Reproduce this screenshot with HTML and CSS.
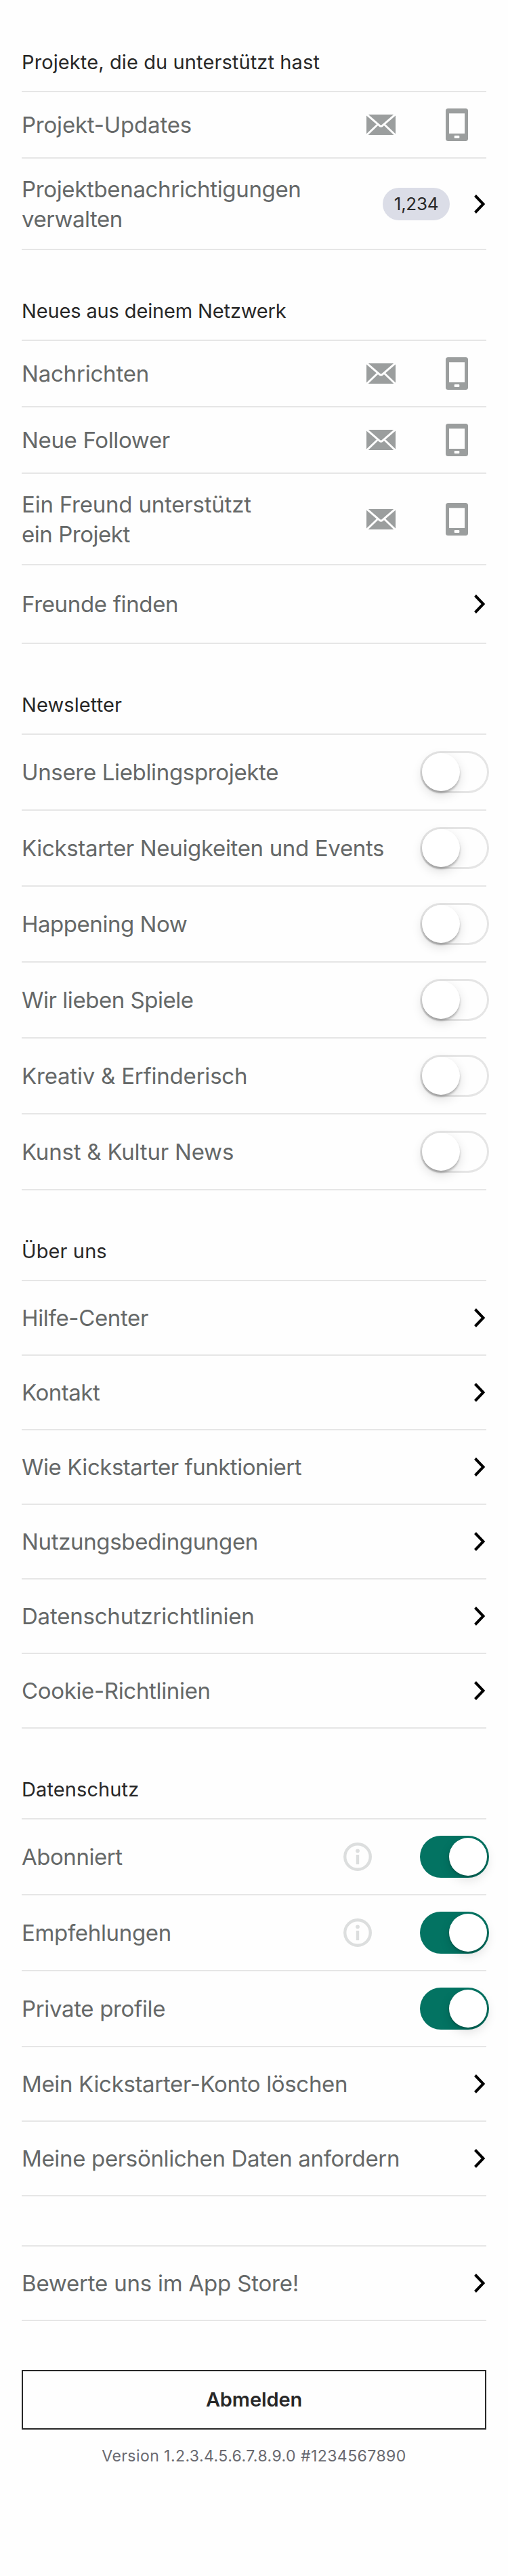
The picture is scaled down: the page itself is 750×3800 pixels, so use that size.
FILE: index.html
```html
<!DOCTYPE html>
<html lang="de">
<head>
<meta charset="utf-8">
<title>Einstellungen</title>
<link rel="stylesheet" href="styles.css">
</head>
<body>
<svg class="sprite" aria-hidden="true">
  <symbol id="mail" viewBox="0 0 43 30">
    <rect width="43" height="30" rx="1" fill="#9b9e9e"/>
    <path d="M0 -.5 19.5 16.3Q21.5 18.2 23.5 16.3L43 -.5M0 30.5 16.2 15M43 30.5 26.8 15" fill="none" stroke="#fefefe" stroke-width="3"/>
  </symbol>
  <symbol id="phone" viewBox="0 0 33 48">
    <rect width="33" height="48" rx="3.5" fill="#9b9e9e"/>
    <rect x="5" y="7.3" width="23" height="29.7" fill="#fefefe"/>
    <rect x="12.7" y="40" width="7.6" height="4" rx="1" fill="#fefefe"/>
  </symbol>
  <symbol id="chevron" viewBox="0 0 16 28">
    <path d="M1.5 1.5 13.5 14 1.5 26.5" fill="none" stroke="#000" stroke-width="4"/>
  </symbol>
  <symbol id="info" viewBox="0 0 42 42">
    <circle cx="21" cy="21" r="18.8" fill="none" stroke="#dcdede" stroke-width="4.4"/>
    <circle cx="21" cy="12.3" r="2.9" fill="#dcdede"/>
    <rect x="18.8" y="18" width="4.4" height="14.2" fill="#dcdede"/>
  </symbol>
</svg>
<main class="settings">
  <section>
    <h2 class="heading">Projekte, die du unterstützt hast</h2>
    <div class="row compact"><span class="label loose">Projekt-Updates</span><svg class="mail"><use href="#mail"/></svg><svg class="phone"><use href="#phone"/></svg></div>
    <div class="row double"><span class="label">Projektbenachrichtigungen<br><span class="tight">verwalten</span></span><span class="badge">1,234</span><svg class="chevron"><use href="#chevron"/></svg></div>
  </section>
  <section>
    <h2 class="heading snug">Neues aus deinem Netzwerk</h2>
    <div class="row compact"><span class="label loose">Nachrichten</span><svg class="mail"><use href="#mail"/></svg><svg class="phone"><use href="#phone"/></svg></div>
    <div class="row compact"><span class="label">Neue Follower</span><svg class="mail"><use href="#mail"/></svg><svg class="phone"><use href="#phone"/></svg></div>
    <div class="row double"><span class="label loose">Ein Freund unterstützt<br><span class="tight">ein Projekt</span></span><svg class="mail"><use href="#mail"/></svg><svg class="phone"><use href="#phone"/></svg></div>
    <div class="row tall"><span class="label">Freunde finden</span><svg class="chevron"><use href="#chevron"/></svg></div>
  </section>
  <section>
    <h2 class="heading">Newsletter</h2>
    <div class="row switchable"><span class="label">Unsere Lieblingsprojekte</span><span class="toggle"></span></div>
    <div class="row switchable"><span class="label">Kickstarter Neuigkeiten und Events</span><span class="toggle"></span></div>
    <div class="row switchable"><span class="label tight">Happening Now</span><span class="toggle"></span></div>
    <div class="row switchable"><span class="label tight">Wir lieben Spiele</span><span class="toggle"></span></div>
    <div class="row switchable"><span class="label loose">Kreativ &amp; Erfinderisch</span><span class="toggle"></span></div>
    <div class="row switchable"><span class="label loose">Kunst &amp; Kultur News</span><span class="toggle"></span></div>
  </section>
  <section>
    <h2 class="heading">Über uns</h2>
    <div class="row"><span class="label">Hilfe-Center</span><svg class="chevron"><use href="#chevron"/></svg></div>
    <div class="row"><span class="label tight">Kontakt</span><svg class="chevron"><use href="#chevron"/></svg></div>
    <div class="row"><span class="label tight">Wie Kickstarter funktioniert</span><svg class="chevron"><use href="#chevron"/></svg></div>
    <div class="row"><span class="label">Nutzungsbedingungen</span><svg class="chevron"><use href="#chevron"/></svg></div>
    <div class="row"><span class="label loose">Datenschutzrichtlinien</span><svg class="chevron"><use href="#chevron"/></svg></div>
    <div class="row"><span class="label">Cookie-Richtlinien</span><svg class="chevron"><use href="#chevron"/></svg></div>
  </section>
  <section>
    <h2 class="heading">Datenschutz</h2>
    <div class="row switchable"><span class="label tight">Abonniert</span><svg class="info"><use href="#info"/></svg><span class="toggle on"></span></div>
    <div class="row switchable"><span class="label">Empfehlungen</span><svg class="info"><use href="#info"/></svg><span class="toggle on"></span></div>
    <div class="row switchable"><span class="label">Private profile</span><span class="toggle on"></span></div>
    <div class="row"><span class="label">Mein Kickstarter-Konto löschen</span><svg class="chevron"><use href="#chevron"/></svg></div>
    <div class="row"><span class="label">Meine persönlichen Daten anfordern</span><svg class="chevron"><use href="#chevron"/></svg></div>
  </section>
  <section class="rating">
    <div class="row"><span class="label loose">Bewerte uns im App Store!</span><svg class="chevron"><use href="#chevron"/></svg></div>
  </section>
  <button class="logout">Abmelden</button>
  <p class="version">Version 1.2.3.4.5.6.7.8.9.0 #1234567890</p>
</main>
</body>
</html>
```
FILE: styles.css
```css
* { box-sizing: border-box; }

body {
  margin: 0;
  background: #fefefe;
  color: #656868;
  font-family: Inter, "Liberation Sans", sans-serif;
}

.sprite { display: none; }

.settings {
  min-height: 3800px;
  padding: 2px 32px 0;
}

.heading {
  display: flex;
  align-items: flex-end;
  height: 134px;
  margin: 0;
  padding-bottom: 24px;
  border-bottom: 2px solid #e6e6e6;
  color: #282828;
  font-size: 29px;
  font-weight: 400;
  line-height: 36px;
  letter-spacing: 0.11px;
}

.heading.snug { letter-spacing: -0.14px; }

.row {
  display: flex;
  align-items: center;
  height: 110px;
  border-bottom: 2px solid #e6e6e6;
}

.row.compact { height: 98px; }
.row.double { height: 135px; }
.row.tall { height: 116px; }
.row.switchable { height: 112px; }

.label {
  flex: 1;
  font-size: 33px;
  line-height: 44px;
  letter-spacing: -0.34px;
  white-space: nowrap;
}

.loose { letter-spacing: -0.21px; }
.tight { letter-spacing: -0.47px; }

svg { flex: none; }

.mail {
  width: 43px;
  height: 30px;
  margin-right: 74px;
}

.phone {
  width: 33px;
  height: 48px;
  margin-right: 27px;
}

.chevron {
  width: 16px;
  height: 28px;
  margin-right: 2px;
}

.info {
  width: 42px;
  height: 42px;
  margin-right: 71px;
}

.badge {
  width: 99px;
  height: 48px;
  margin-right: 36px;
  border-radius: 24px;
  background: #dbdde7;
  color: #282828;
  font-size: 26px;
  line-height: 48px;
  letter-spacing: -0.3px;
  text-align: center;
}

.toggle {
  display: flex;
  flex: none;
  width: 102px;
  height: 62px;
  margin-right: -4px;
  padding: 3px;
  border-radius: 31px;
  box-shadow: inset 0 0 0 3px #e5e5e5;
}

.toggle::before {
  content: "";
  width: 56px;
  height: 56px;
  border-radius: 50%;
  background: #fff;
  box-shadow: 0 6px 16px rgba(0, 0, 0, 0.13), 0 3px 3px rgba(0, 0, 0, 0.24);
}

.toggle.on {
  justify-content: flex-end;
  background: #037362;
  box-shadow: none;
}

.toggle.on::before {
  box-shadow: 0 6px 16px rgba(0, 0, 0, 0.13), 0 2px 3px rgba(0, 0, 0, 0.2);
}

.rating {
  margin-top: 72px;
  border-top: 2px solid #e6e6e6;
}

.logout {
  display: block;
  width: 100%;
  height: 88px;
  margin: 72px 0 0;
  padding: 0;
  border: 2px solid #282828;
  background: transparent;
  color: #282828;
  font: 600 29px/84px Inter, "Liberation Sans", sans-serif;
  letter-spacing: -0.1px;
}

.version {
  margin: 23px 0 0;
  color: #696970;
  font-size: 23px;
  line-height: 32px;
  letter-spacing: 0.44px;
  text-align: center;
}
```
